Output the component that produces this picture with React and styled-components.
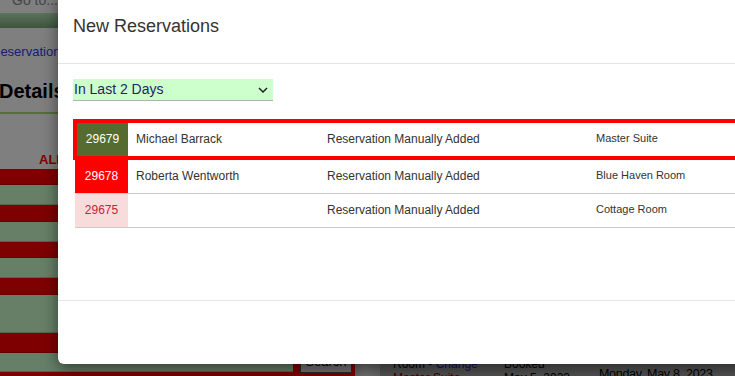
import React from 'react'
import styled, { createGlobalStyle } from 'styled-components'

const GlobalStyle = createGlobalStyle`
  html, body {
    margin: 0;
    padding: 0;
  }
  body {
    font-family: "Liberation Sans", Arial, sans-serif;
    background: #fff;
    overflow: hidden;
  }
`

const reservations = [
  { id: '29679', name: 'Michael Barrack', note: 'Reservation Manually Added', room: 'Master Suite', status: 'current' },
  { id: '29678', name: 'Roberta Wentworth', note: 'Reservation Manually Added', room: 'Blue Haven Room', status: 'new' },
  { id: '29675', name: '', note: 'Reservation Manually Added', room: 'Cottage Room', status: 'old' },
]

// heights of the alert rows on the page behind the dialog
const alertRows = [
  ['red', 16], ['green', 20], ['red', 17], ['green', 20], ['red', 16], ['green', 20],
  ['red', 17], ['green', 38], ['red', 20], ['green', 19], ['red', 12],
]

const App = () => {
  return (
    <Page>
      <GlobalStyle />
      <PageInner>
        <TopBar>Go to...</TopBar>
        <NavBar />
        <Crumb>Reservation</Crumb>
        <Heading>Details</Heading>
        <GreenRule />
        <Content>
          <AlertsColumn>
            <AlertsHeader>ALERTS</AlertsHeader>
            {alertRows.map(([tone, h], i) => (
              <AlertRow key={i} $tone={tone} $h={h} />
            ))}
          </AlertsColumn>
          <SearchColumn>
            <SearchCell>
              <SearchButton>Search</SearchButton>
            </SearchCell>
          </SearchColumn>
          <Spacer />
          <RoomPanel>
            <RoomGrid>
              <span>Room - <LinkText>Change</LinkText></span>
              <span>Booked</span>
              <Arrival>Monday, May 8, 2023</Arrival>
              <RoomName>Master Suite</RoomName>
              <span>May 5, 2023</span>
            </RoomGrid>
          </RoomPanel>
        </Content>
      </PageInner>

      <Backdrop />
      <Modal>
        <ModalHeader>
          <ModalTitle>New Reservations</ModalTitle>
        </ModalHeader>
        <ModalBody>
          <SelectWrap>
            <RangeSelect defaultValue="2">
              <option value="2">In Last 2 Days</option>
              <option value="7">In Last 7 Days</option>
            </RangeSelect>
            <Chevron width="10" height="6" viewBox="0 0 10 6">
              <path d="M1 1 L5 5 L9 1" fill="none" stroke="#222" strokeWidth="1.5" />
            </Chevron>
          </SelectWrap>
          <ResTable>
            <colgroup>
              <col style={{ width: 53 }} />
              <col style={{ width: 191 }} />
              <col style={{ width: 269 }} />
              <col />
            </colgroup>
            <tbody>
              {reservations.map((r) => (
                <ResRow key={r.id} $current={r.status === 'current'}>
                  <IdCell $status={r.status}>{r.id}</IdCell>
                  <Cell>{r.name}</Cell>
                  <Cell>{r.note}</Cell>
                  <RoomCell>{r.room}</RoomCell>
                </ResRow>
              ))}
            </tbody>
          </ResTable>
        </ModalBody>
        <ModalFooter />
      </Modal>
    </Page>
  )
}

export default App

const Page = styled.div`
  position: relative;
  width: 735px;
  height: 376px;
  overflow: hidden;
`
const PageInner = styled.div`
  margin-left: -12px;
  margin-top: -8px;
  width: 760px;
`
const TopBar = styled.div`
  height: 21px;
  padding-left: 24px;
  font-size: 14px;
  line-height: 16px;
  color: #8a8a8a;
`
const NavBar = styled.div`
  height: 15px;
  background: linear-gradient(#b8e6b8, #7aab7a);
`
const Crumb = styled.div`
  padding: 16px 0 0 3px;
  font-size: 13px;
  line-height: 16px;
  color: #3636f0;
`
const Heading = styled.h2`
  margin: 19px 0 0;
  padding-left: 11px;
  font-size: 20px;
  line-height: 24px;
  font-weight: bold;
  color: #000;
`
const GreenRule = styled.div`
  margin-top: 9px;
  height: 2px;
  background: #aadd77;
`
const Content = styled.div`
  display: grid;
  grid-template-columns: 305px 62px 25px 1fr;
  grid-template-rows: 262px;
  height: 262px;
  overflow: hidden;
`
const AlertsColumn = styled.div`
  display: flex;
  flex-direction: column;
  min-height: 0;
  overflow: hidden;
`
const AlertsHeader = styled.div`
  flex: none;
  height: 55px;
  box-sizing: border-box;
  padding: 38px 0 0 51px;
  font-size: 13px;
  line-height: 15px;
  font-weight: bold;
  color: #ff0000;
`
const AlertRow = styled.div`
  flex: none;
  height: ${(p) => p.$h}px;
  box-sizing: border-box;
  border-bottom: 1px solid rgba(0, 0, 0, 0.2);
  background: ${(p) => (p.$tone === 'red' ? '#ff0000' : '#ccffcc')};
`
const SearchColumn = styled.div`
  display: flex;
  flex-direction: column;
  justify-content: flex-end;
  background: #ccffcc;
`
const SearchCell = styled.div`
  background: #ff0000;
  padding: 4px 3px 3px 7px;
`
const SearchButton = styled.button`
  display: block;
  width: 52px;
  height: 24px;
  padding: 0;
  border: 1px solid #555;
  background: #e8e8e8;
  font-family: "Liberation Sans", Arial, sans-serif;
  font-size: 13px;
  color: #000;
`
const Spacer = styled.div`
  background: linear-gradient(90deg, #d0d0d0, #e4e4e4 40%, #cfcfcf);
`
const RoomPanel = styled.div`
  background: linear-gradient(#d4d4d4, #a6a6a6);
  padding: 243px 0 0 13px;
`
const RoomGrid = styled.div`
  display: grid;
  grid-template-columns: 111px 95px 1fr;
  grid-auto-rows: 14px;
  font-size: 12px;
  line-height: 14px;
  color: #000;
`
const LinkText = styled.span`
  color: #2323c8;
`
const RoomName = styled.span`
  color: #8b0000;
`
const Arrival = styled.span`
  grid-column: 3;
  grid-row: 1 / span 2;
  align-self: center;
  padding-top: 6px;
  font-size: 12.5px;
  letter-spacing: -0.3px;
`

const Backdrop = styled.div`
  position: absolute;
  inset: 0;
  background: rgba(0, 0, 0, 0.5);
  z-index: 1;
`
const Modal = styled.div`
  position: absolute;
  left: 58px;
  top: -10px;
  width: 720px;
  z-index: 2;
  background: #fff;
  border-radius: 6px;
  box-shadow: 0 5px 15px rgba(0, 0, 0, 0.5);
`
const ModalHeader = styled.div`
  height: 74px;
  box-sizing: border-box;
  padding: 26px 15px 0;
  border-bottom: 1px solid #e5e5e5;
`
const ModalTitle = styled.h4`
  margin: 0;
  font-size: 18px;
  line-height: 20px;
  font-weight: normal;
  color: #333;
`
const ModalBody = styled.div`
  height: 236px;
  box-sizing: border-box;
  padding: 15px;
`
const ModalFooter = styled.div`
  height: 64px;
  box-sizing: border-box;
  border-top: 1px solid #e5e5e5;
`
const SelectWrap = styled.div`
  position: relative;
  width: 200px;
  height: 22px;
`
const RangeSelect = styled.select`
  appearance: none;
  display: block;
  width: 100%;
  height: 22px;
  margin: 0;
  padding: 0 0 1px 1px;
  border: 0;
  border-bottom: 1px solid #b0b0b0;
  border-radius: 0;
  background: #ccffcc;
  font-family: "Liberation Sans", Arial, sans-serif;
  font-size: 14px;
  color: #1f2366;
  outline: none;
`
const Chevron = styled.svg`
  position: absolute;
  right: 5px;
  top: 8px;
  pointer-events: none;
`
const ResTable = styled.table`
  margin-top: 18px;
  width: 100%;
  table-layout: fixed;
  border-collapse: collapse;
  font-size: 12px;
  color: #333;
`
const ResRow = styled.tr`
  td {
    border-bottom: 1px solid #cccccc;
  }
  ${(p) =>
    p.$current &&
    `
    td {
      border-top: 4px solid #ff0000;
      border-bottom: 4px solid #ff0000;
    }
    td:first-child {
      border-left: 4px solid #ff0000;
    }
  `}
`
const Cell = styled.td`
  padding: 8px;
  line-height: 17px;
  vertical-align: middle;
  white-space: nowrap;
`
const idTones = {
  current: ['#556b2f', '#ffffff'],
  new: ['#ff0000', '#ffffff'],
  old: ['#f8dcdc', '#c8203c'],
}
const IdCell = styled(Cell)`
  padding: 8px 0;
  text-align: center;
  background: ${(p) => idTones[p.$status][0]};
  color: ${(p) => idTones[p.$status][1]};
`
const RoomCell = styled(Cell)`
  font-size: 11px;
  padding-top: 7px;
  padding-bottom: 9px;
  line-height: 17px;
`
